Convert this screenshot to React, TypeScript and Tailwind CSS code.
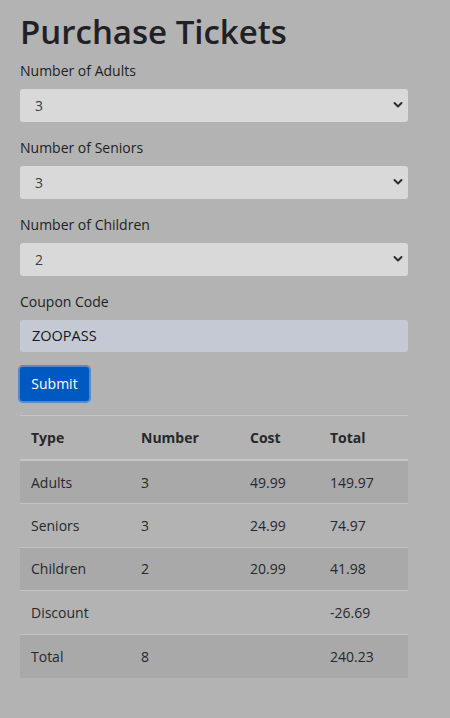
import React from "react";

const rows = [
  { type: "Adults", number: "3", cost: "49.99", total: "149.97" },
  { type: "Seniors", number: "3", cost: "24.99", total: "74.97" },
  { type: "Children", number: "2", cost: "20.99", total: "41.98" },
  { type: "Discount", number: "", cost: "", total: "-26.69" },
  { type: "Total", number: "8", cost: "", total: "240.23" },
];

function Chevron() {
  return (
    <svg
      className="pointer-events-none absolute right-[5px] top-1/2 -translate-y-1/2"
      width="10"
      height="8"
      viewBox="0 0 10 8"
      fill="none"
    >
      <path d="M1.5 2 5 5.5 8.5 2" stroke="#2a2d31" strokeWidth="2" strokeLinecap="round" strokeLinejoin="round" />
    </svg>
  );
}

function SelectField({ label, value }: { label: string; value: string }) {
  return (
    <div className="mb-[15.5px]">
      <label className="block text-[14px] leading-[21px] mb-[7.5px] text-[#1d1f22]">{label}</label>
      <div className="relative w-[388px]">
        <select
          defaultValue={value}
          className="block w-full h-[33px] appearance-none rounded-[3px] bg-[#d9d9d9] pl-[15px] text-[14px] text-[#3a3e46] outline-none"
        >
          {["0", "1", "2", "3", "4", "5"].map((n) => (
            <option key={n} value={n}>
              {n}
            </option>
          ))}
        </select>
        <Chevron />
      </div>
    </div>
  );
}

export default function App() {
  return (
    <div className="min-h-screen bg-[#b3b3b3] px-[20px] pt-[12px] font-['Open_Sans','Noto_Sans',sans-serif] text-[#1d1f22]">
      <h1 className="text-[33px] font-semibold leading-[40px] text-[#1f2125] mb-[8px]">Purchase Tickets</h1>

      <SelectField label="Number of Adults" value="3" />
      <SelectField label="Number of Seniors" value="3" />
      <SelectField label="Number of Children" value="2" />

      <div className="mb-[15px]">
        <label className="block text-[14px] leading-[21px] mb-[7.5px]">Coupon Code</label>
        <input
          defaultValue="ZOOPASS"
          className="block w-[388px] h-[32px] rounded-[3px] bg-[#c4c9d4] px-[12px] text-[14.5px] text-[#16181b] outline-none"
        />
      </div>

      <button className="h-[34px] w-[69px] rounded-[3px] bg-[#0059c1] text-[14px] text-white ring-2 ring-[#5e86c2] mb-[14px]">
        Submit
      </button>

      <table className="w-[388px] border-collapse text-[14px] text-[#26282b]">
        <thead>
          <tr className="border-t border-[#c6c6c6] border-b-2 border-b-[#c2c6cc]">
            <th className="h-[45px] pl-[11px] text-left font-bold w-[121px]">Type</th>
            <th className="text-left font-bold w-[109px]">Number</th>
            <th className="text-left font-bold w-[80px]">Cost</th>
            <th className="text-left font-bold">Total</th>
          </tr>
        </thead>
        <tbody>
          {rows.map((r, i) => (
            <tr
              key={r.type}
              className={`${i % 2 === 0 ? "bg-[#a9a9a9]" : ""} ${i < rows.length - 1 ? "border-b border-[#c4c4c4]" : ""}`}
            >
              <td className="h-[43.5px] pl-[11px]">{r.type}</td>
              <td>{r.number}</td>
              <td>{r.cost}</td>
              <td>{r.total}</td>
            </tr>
          ))}
        </tbody>
      </table>
    </div>
  );
}
